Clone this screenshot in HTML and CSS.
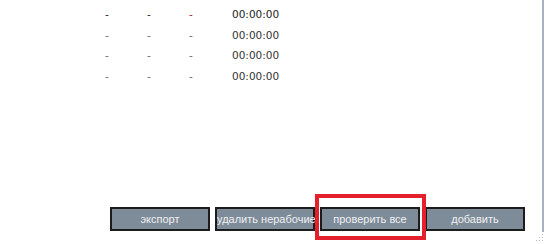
FILE: index.html
```html
<!DOCTYPE html>
<html lang="ru">
<head>
    <meta charset="UTF-8">
    <meta name="viewport" content="width=device-width, initial-scale=1.0">
    <title>Проверка</title>
    <link rel="stylesheet" href="styles.css">
</head>
<body>
    <div class="panel">
        <div class="rows">
            <div class="row first"><span>-</span><span>-</span><span class="red">-</span><span class="time">00:00:00</span></div>
            <div class="row"><span>-</span><span>-</span><span>-</span><span class="time">00:00:00</span></div>
            <div class="row"><span>-</span><span>-</span><span>-</span><span class="time">00:00:00</span></div>
            <div class="row"><span>-</span><span>-</span><span>-</span><span class="time">00:00:00</span></div>
        </div>
        <div class="actions">
            <button class="btn">экспорт</button>
            <button class="btn">удалить нерабочие</button>
            <button class="btn">проверить все</button>
            <button class="btn">добавить</button>
        </div>
    </div>

    <div class="highlight"></div>

    <svg class="grip" width="8" height="8" viewBox="0 0 8 8">
        <rect x="6" y="0" width="1" height="1" fill="#b8bcc4"/>
        <rect x="6" y="3" width="1" height="1" fill="#b8bcc4"/>
        <rect x="3" y="3" width="1" height="1" fill="#b8bcc4"/>
        <rect x="6" y="6" width="1" height="1" fill="#b8bcc4"/>
        <rect x="3" y="6" width="1" height="1" fill="#b8bcc4"/>
        <rect x="0" y="6" width="1" height="1" fill="#b8bcc4"/>
    </svg>
</body>
</html>
```

FILE: styles.css
```css
body {
    margin: 0;
    height: 100vh;
    background: white;
    font-family: "DejaVu Sans", sans-serif;
    font-size: 10.5px;
    color: #333;
    overflow: hidden;
}
.panel {
    width: 544px;
    height: 232px;
    box-sizing: border-box;
    border-right: 2px solid #a9b1c0;
    display: flex;
    flex-direction: column;
}
.rows {
    padding-top: 4px;
    padding-left: 86px;
}
.row {
    display: grid;
    grid-template-columns: 42px 42px 42px auto;
    height: 20.7px;
    line-height: 20.7px;
}
.row span {
    text-align: center;
    color: #666;
}
.row.first span { color: #222; }
.row.first .red { color: #9a2038; }
.row .time {
    text-align: left;
    padding-left: 20px;
    color: #333;
}
.actions {
    margin-top: auto;
    margin-left: 110px;
    margin-bottom: 1px;
    display: flex;
    gap: 5px;
}
.btn {
    width: 100px;
    height: 24px;
    box-sizing: border-box;
    border: 2px solid #1c1c1c;
    background: #7e8b98;
    color: #eef0f2;
    font-family: "Liberation Sans", Arial, sans-serif;
    font-size: 11px;
    padding: 0;
    white-space: nowrap;
    overflow: visible;
}
.highlight {
    position: absolute;
    left: 315px;
    top: 194px;
    width: 111px;
    height: 46px;
    box-sizing: border-box;
    border: 4px solid #e3202b;
}
.grip {
    position: absolute;
    right: 4px;
    bottom: 2px;
}
```
